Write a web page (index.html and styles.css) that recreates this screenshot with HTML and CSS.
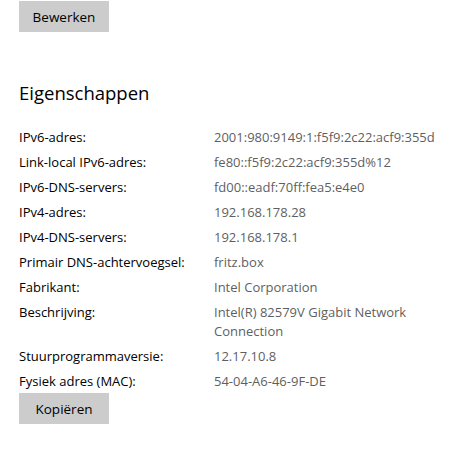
FILE: index.html
```html
<!DOCTYPE html>
<html lang="nl">
<head>
<meta charset="utf-8">
<link rel="stylesheet" href="styles.css">
</head>
<body>
<div class="page">
  <button class="btn btn-top">Bewerken</button>
  <h2 class="title">Eigenschappen</h2>
  <div class="props">
    <div class="label">IPv6-adres:</div><div class="value">2001:980:9149:1:f5f9:2c22:acf9:355d</div>
    <div class="label">Link-local IPv6-adres:</div><div class="value">fe80::f5f9:2c22:acf9:355d%12</div>
    <div class="label">IPv6-DNS-servers:</div><div class="value">fd00::eadf:70ff:fea5:e4e0</div>
    <div class="label">IPv4-adres:</div><div class="value">192.168.178.28</div>
    <div class="label">IPv4-DNS-servers:</div><div class="value">192.168.178.1</div>
    <div class="label">Primair DNS-achtervoegsel:</div><div class="value">fritz.box</div>
    <div class="label">Fabrikant:</div><div class="value">Intel Corporation</div>
    <div class="label">Beschrijving:</div><div class="value">Intel(R) 82579V Gigabit Network Connection</div>
    <div class="label">Stuurprogrammaversie:</div><div class="value">12.17.10.8</div>
    <div class="label">Fysiek adres (MAC):</div><div class="value">54-04-A6-46-9F-DE</div>
  </div>
  <button class="btn btn-copy">Kopiëren</button>
</div>
</body>
</html>
```

FILE: styles.css
```css
html, body {
  margin: 0;
  padding: 0;
  background: #ffffff;
}
.page {
  padding: 1px 0 0 19px;
  font-family: "Open Sans", "Noto Sans", sans-serif;
  font-size: 13px;
  color: #000;
  display: flex;
  flex-direction: column;
  align-items: flex-start;
}
.btn {
  width: 90px;
  height: 31px;
  background: #cccccc;
  border: none;
  margin: 0;
  padding: 0;
  font-family: inherit;
  font-size: 13.5px;
  color: #000;
}
.title {
  margin: 48px 0 0 0;
  font-weight: 400;
  font-size: 18.5px;
  line-height: 26px;
  color: #000;
}
.props {
  margin-top: 22px;
  display: grid;
  grid-template-columns: 195px 236px;
  row-gap: 6px;
  line-height: 19px;
}
.label {
  color: #000;
}
.value {
  color: #5f5f5f;
}
.btn-copy {
  margin-top: 2px;
}
```
